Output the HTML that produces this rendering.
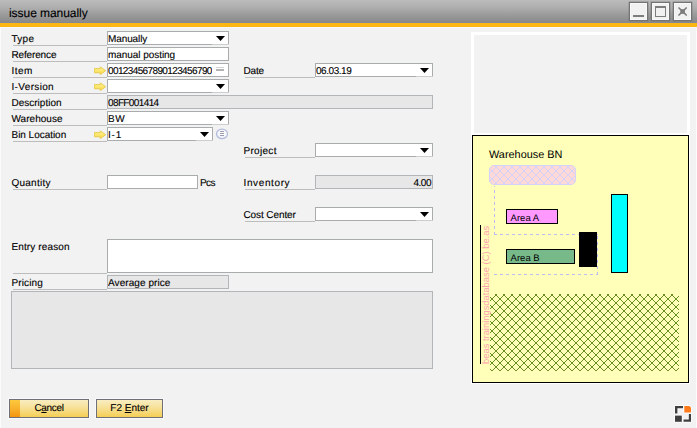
<!DOCTYPE html>
<html>
<head>
<meta charset="utf-8">
<title>issue manually</title>
<style>
*{box-sizing:border-box;margin:0;padding:0}
html,body{width:697px;height:428px;overflow:hidden;background:#f2f2f2}
body{position:relative;font-family:"Liberation Sans",sans-serif;font-size:10px;color:#000;text-rendering:geometricPrecision;-webkit-text-stroke:0.12px #000}
.abs{position:absolute}
#title{left:0;top:0;width:697px;height:23px;background:linear-gradient(#bcbcbc 0%,#aeaeae 33%,#9b9b9b 64%,#8b8b8b 94%,#858997 97%)}
#orange{left:0;top:23px;width:697px;height:4px;background:#fdb714}
#ttext{left:9px;top:5px;font-size:12px;letter-spacing:-0.05px;line-height:16px;color:#000;white-space:nowrap}
.wb{top:2px;width:19px;height:19px;border:1px solid #737373;background:#f1f1f1;box-shadow:0 0 0 0.5px rgba(110,110,110,.5),inset 0 0 0 1px #f8f8f8}
.lbl{position:absolute;line-height:17px;white-space:nowrap;text-indent:-0.5px}
.lbl:after{content:"";position:absolute;left:1px;right:0;bottom:0;height:1px;background:#bdbdbd}
.in{position:absolute;border:1px solid #a9acad;background:#fff;line-height:15px;white-space:nowrap;overflow:hidden;padding-left:0}
.ro{background:#e7e7e7;border-color:#b3b6b8}
.dd:after{content:"";position:absolute;right:3px;top:4px;width:9px;height:5px;background:#000;clip-path:polygon(0 0,100% 0,50% 100%)}
.arrow{position:absolute;width:12px;height:9px}
svg text{-webkit-text-stroke:0}
.btn{position:absolute;top:399px;height:19px;border:1px solid #6f7077;box-shadow:0 0 0 1px #f9f9f9;background:linear-gradient(#f9edc2,#f7e094 48%,#f5ce54);text-align:center;line-height:17px}
</style>
</head>
<body>
<div class="abs" id="title"></div>
<div class="abs" id="orange"></div>
<div class="abs" id="ttext">issue manually</div>
<div class="abs" style="left:0;top:27px;width:697px;height:1px;background:#f5f7fb"></div>
<div class="abs" style="left:0;top:27px;width:1px;height:401px;background:#fbfbfb"></div>
<div class="abs" style="left:696px;top:27px;width:1px;height:401px;background:#fbfbfb"></div>

<!-- window buttons -->
<div class="abs wb" style="left:629px"><div class="abs" style="left:3px;top:12px;width:11px;height:2px;background:#7d7d7d"></div></div>
<div class="abs wb" style="left:651px"><div class="abs" style="left:3px;top:3px;width:11px;height:11px;border:1px solid #7d7d7d;border-top-width:2px"></div></div>
<div class="abs wb" style="left:673px"><svg class="abs" style="left:0;top:0" width="17" height="17" viewBox="0 0 17 17"><path d="M5 5 L12.2 12 M12.2 5 L5 12" stroke="#7b7b7b" stroke-width="1.7" stroke-linecap="round"/><rect x="6.3" y="6.2" width="4.6" height="4.6" fill="#7b7b7b"/></svg></div>

<!-- labels left -->
<div class="lbl" style="left:12px;top:31px;width:95px;height:15px;letter-spacing:0.27px;">Type</div>
<div class="lbl" style="left:12px;top:47px;width:95px;height:15px;letter-spacing:-0.15px;">Reference</div>
<div class="lbl" style="left:12px;top:63px;width:95px;height:15px;letter-spacing:0.47px;">Item</div>
<div class="lbl" style="left:12px;top:79px;width:95px;height:15px;letter-spacing:0.34px;">I-Version</div>
<div class="lbl" style="left:12px;top:95px;width:95px;height:15px;">Description</div>
<div class="lbl" style="left:12px;top:111px;width:95px;height:15px;letter-spacing:0.03px;">Warehouse</div>
<div class="lbl" style="left:12px;top:127px;width:95px;height:15px;letter-spacing:-0.03px;">Bin Location</div>
<div class="lbl" style="left:12px;top:175px;width:95px;height:15px;letter-spacing:0.24px;">Quantity</div>
<div class="lbl" style="left:12px;top:275px;width:95px;height:15px;letter-spacing:0.13px;">Pricing</div>
<div class="lbl" style="left:12px;top:239px;width:95px;height:35px;letter-spacing:0.12px;">Entry reason</div>

<!-- inputs left -->
<div class="in dd" style="left:107px;top:31px;width:122px;height:14px;letter-spacing:-0.1px;">Manually</div>
<div class="abs" style="left:212px;top:44px;width:17px;height:1px;background:#cecece"></div>
<div class="in " style="left:107px;top:47px;width:122px;height:14px;letter-spacing:-0.05px;">manual posting</div>
<div class="in" style="left:107px;top:63px;width:122px;height:14px"><span style="display:inline-block;width:104px;overflow:hidden;vertical-align:top;letter-spacing:-0.62px">00123456789012345679012</span><span class="abs" style="left:108px;top:3px;width:8px;height:1px;background:#d2d2d2"></span><span class="abs" style="left:108px;top:5px;width:8px;height:2px;background:#b3b3b3"></span></div>
<div class="in dd" style="left:107px;top:79px;width:122px;height:14px;"></div>
<div class="abs" style="left:212px;top:92px;width:17px;height:1px;background:#cecece"></div>
<div class="in ro" style="left:107px;top:95px;width:326px;height:14px;letter-spacing:-0.62px;">08FF001414</div>
<div class="in dd" style="left:107px;top:111px;width:122px;height:14px;letter-spacing:0.5px;">BW</div>
<div class="abs" style="left:212px;top:124px;width:17px;height:1px;background:#cecece"></div>
<div class="in dd" style="left:107px;top:127px;width:106px;height:14px;letter-spacing:0.8px;">I-1</div>
<div class="abs" style="left:196px;top:140px;width:17px;height:1px;background:#cecece"></div>
<div class="in " style="left:107px;top:175px;width:91px;height:14px;"></div>
<div class="abs" style="left:200px;top:175px;line-height:17px;letter-spacing:-0.6px;">Pcs</div>
<div class="in " style="left:107px;top:239px;width:326px;height:34px;"></div>
<div class="in ro" style="left:107px;top:275px;width:122px;height:14px;letter-spacing:0.07px;">Average price</div>
<div class="in ro" style="left:11px;top:291px;width:422px;height:78px;"></div>

<!-- yellow arrows -->
<svg class="arrow" style="left:94px;top:66px" viewBox="0 0 12 9"><path d="M0.4 2.6 H6.3 V0.9 L11.7 4.7 L6.3 8.6 V6.8 H0.4 Z" fill="url(#ag)" stroke="#e6c74c" stroke-width="0.9" stroke-linejoin="round"/></svg>
<svg class="arrow" style="left:94px;top:82px" viewBox="0 0 12 9"><path d="M0.4 2.6 H6.3 V0.9 L11.7 4.7 L6.3 8.6 V6.8 H0.4 Z" fill="url(#ag)" stroke="#e6c74c" stroke-width="0.9" stroke-linejoin="round"/></svg>
<svg class="arrow" style="left:94px;top:130px" viewBox="0 0 12 9"><path d="M0.4 2.6 H6.3 V0.9 L11.7 4.7 L6.3 8.6 V6.8 H0.4 Z" fill="url(#ag)" stroke="#e6c74c" stroke-width="0.9" stroke-linejoin="round"/></svg>

<!-- circle icon -->
<svg class="abs" style="left:215px;top:127px" width="14" height="14" viewBox="215 127 14 14"><defs><radialGradient id="cg" cx="0.55" cy="0.4" r="0.7"><stop offset="0" stop-color="#fff"/><stop offset="0.6" stop-color="#f3f5fb"/><stop offset="1" stop-color="#d4daee"/></radialGradient><linearGradient id="ag" x1="0" y1="0" x2="0" y2="1"><stop offset="0" stop-color="#fff59a"/><stop offset="1" stop-color="#f8d740"/></linearGradient></defs><ellipse cx="222" cy="133.9" rx="5.5" ry="4.8" fill="url(#cg)" stroke="#b3bbdb" stroke-width="1.2"/><path d="M220 131.5 H224 M220 133.5 H224 M220 135.5 H224" stroke="#9c9cab" stroke-width="1"/></svg>

<!-- middle column -->
<div class="lbl" style="left:244px;top:63px;width:71px;height:15px;letter-spacing:-0.17px;">Date</div>
<div class="lbl" style="left:244px;top:143px;width:71px;height:15px;letter-spacing:0.3px;">Project</div>
<div class="lbl" style="left:244px;top:175px;width:71px;height:15px;letter-spacing:0.62px;">Inventory</div>
<div class="lbl" style="left:244px;top:207px;width:71px;height:15px;letter-spacing:-0.1px;">Cost Center</div>
<div class="in dd" style="left:315px;top:63px;width:118px;height:14px;letter-spacing:-0.45px;">06.03.19</div>
<div class="abs" style="left:416px;top:76px;width:17px;height:1px;background:#cecece"></div>
<div class="in dd" style="left:315px;top:143px;width:118px;height:14px;"></div>
<div class="abs" style="left:416px;top:156px;width:17px;height:1px;background:#cecece"></div>
<div class="in ro" style="left:315px;top:175px;width:118px;height:14px;letter-spacing:-0.5px;text-align:right;padding-right:1px;">4.00</div>
<div class="in dd" style="left:315px;top:207px;width:118px;height:14px;"></div>
<div class="abs" style="left:416px;top:220px;width:17px;height:1px;background:#cecece"></div>

<!-- buttons -->
<div class="btn" style="left:9px;width:80px;letter-spacing:-0.34px;"><div class="abs" style="left:0;top:0;width:10px;height:17px;background:linear-gradient(#fcc93e,#f9b22c 50%,#f4950d)"></div>C<u>a</u>ncel</div>
<div class="btn" style="left:96px;width:67px;">F2 <u>E</u>nter</div>

<!-- right panels -->
<div class="abs" style="left:471px;top:32px;width:219px;height:104px;border:3px solid #fff;background:#f2f2f2"></div>
<div class="abs" style="left:472px;top:135px;width:217px;height:248px;border:1px solid #000;background:#ffffb9;box-shadow:0 0 0 1px #fff"></div>
<svg class="abs" style="left:472px;top:135px" width="217" height="248" viewBox="472 135 217 248">
<defs>
<pattern id="hg" width="8" height="8" patternUnits="userSpaceOnUse" x="488" y="287"><g fill="#6b8e23" shape-rendering="crispEdges"><rect x="0" y="0" width="1" height="1"/><rect x="0" y="7" width="1" height="1"/><rect x="1" y="1" width="1" height="1"/><rect x="1" y="6" width="1" height="1"/><rect x="2" y="2" width="1" height="1"/><rect x="2" y="5" width="1" height="1"/><rect x="3" y="3" width="1" height="1"/><rect x="3" y="4" width="1" height="1"/><rect x="4" y="4" width="1" height="1"/><rect x="4" y="3" width="1" height="1"/><rect x="5" y="5" width="1" height="1"/><rect x="5" y="2" width="1" height="1"/><rect x="6" y="6" width="1" height="1"/><rect x="6" y="1" width="1" height="1"/><rect x="7" y="7" width="1" height="1"/><rect x="7" y="0" width="1" height="1"/></g></pattern>
<pattern id="hp" width="8" height="8" patternUnits="userSpaceOnUse" x="488" y="287"><g fill="#d4d2f8" shape-rendering="crispEdges"><rect x="0" y="0" width="1" height="1"/><rect x="0" y="7" width="1" height="1"/><rect x="1" y="1" width="1" height="1"/><rect x="1" y="6" width="1" height="1"/><rect x="2" y="2" width="1" height="1"/><rect x="2" y="5" width="1" height="1"/><rect x="3" y="3" width="1" height="1"/><rect x="3" y="4" width="1" height="1"/><rect x="4" y="4" width="1" height="1"/><rect x="4" y="3" width="1" height="1"/><rect x="5" y="5" width="1" height="1"/><rect x="5" y="2" width="1" height="1"/><rect x="6" y="6" width="1" height="1"/><rect x="6" y="1" width="1" height="1"/><rect x="7" y="7" width="1" height="1"/><rect x="7" y="0" width="1" height="1"/></g></pattern>
</defs>
<rect x="489.5" y="165.5" width="86" height="19" rx="4.5" fill="#ffd8d8"/>
<rect x="489.5" y="165.5" width="86" height="19" rx="4.5" fill="url(#hp)" stroke="#d4d2f8"/>
<g fill="none" stroke="#bcbcf4" stroke-width="1" stroke-dasharray="3 3" shape-rendering="crispEdges">
<path d="M494.5 186 V235" stroke-dashoffset="2"/>
<path d="M494 234.5 H598"/>
<path d="M597.5 236 V275"/>
<path d="M494 274.5 H598"/>
</g>
<rect x="506.5" y="209.5" width="51" height="14" fill="#ff99ff" stroke="#000"/>
<rect x="506.5" y="249.5" width="68" height="14" fill="#78b98a" stroke="#000"/>
<rect x="579" y="232" width="18" height="35" fill="#000"/>
<rect x="611.5" y="194.5" width="16" height="78" fill="#00ffff" stroke="#000"/>
<rect x="490" y="294" width="189" height="77" fill="url(#hg)"/>
<rect x="480" y="225" width="1" height="139" fill="#000"/>
<text x="489" y="158" font-size="10.9" font-family="Liberation Sans" fill="#000">Warehouse BN</text>
<text x="510.6" y="221" font-size="9.5" font-family="Liberation Sans" fill="#000">Area A</text>
<text x="510.6" y="261" font-size="9.5" font-family="Liberation Sans" fill="#000">Area B</text>
<text transform="translate(489.3 364) rotate(-90)" font-size="9.4" font-family="Liberation Sans" fill="#ff9fb0">beas trainingsdatabase (C) be.as</text>
</svg>

<!-- corner icon -->
<svg class="abs" style="left:674px;top:405px" width="18" height="18" viewBox="0 0 18 18">
<g fill="#fff" stroke="#fff" stroke-width="1.6" stroke-linejoin="round" opacity="0.9">
<path d="M1 1 H9 V3.2 H3.4 V8.6 H1 Z"/><path d="M10.3 1 H14.5 Q17 1 17 3.8 V7.5 H10.3 Z"/><rect x="1" y="10.6" width="6.8" height="6.2"/><path d="M17 9 V16.8 H9.5 V14.6 H14.8 V9 Z"/>
</g>
<path d="M1 1 H9 V3.2 H3.4 V8.6 H1 Z" fill="#3f3f3f"/>
<path d="M10.3 1 H14.5 Q17 1 17 3.8 V7.5 H10.3 Z" fill="#ff7a1a"/>
<rect x="1" y="10.6" width="6.8" height="6.2" fill="#3f3f3f"/>
<path d="M17 9 V16.8 H9.5 V14.6 H14.8 V9 Z" fill="#3f3f3f"/>
</svg>
</body>
</html>
